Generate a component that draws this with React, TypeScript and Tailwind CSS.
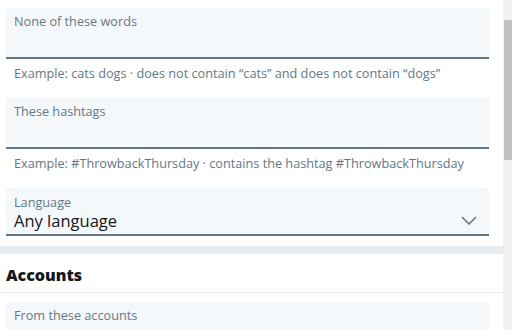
import React from "react";

const font = { fontFamily: '"Open Sans", "Segoe UI", Arial, sans-serif' };

function TextField({ label }: { label: string }) {
  return (
    <div className="h-[51px] border-b-2 border-[#657786] bg-[#f5f8fa] px-[8px] pt-[5px]">
      <div className="text-[12.7px] leading-[16px] text-[#657786]">{label}</div>
    </div>
  );
}

function Helper({ children }: { children: React.ReactNode }) {
  return (
    <div className="h-[39px] px-[8px] pt-[6px] text-[12.7px] leading-[16px] text-[#657786]">
      {children}
    </div>
  );
}

export default function App() {
  return (
    <div className="flex h-[330px] w-[512px] overflow-hidden bg-white" style={font}>
      <div className="w-[503px] shrink-0">
        <div className="pl-[6px] pr-[14px] pt-[8px]">
          <TextField label="None of these words" />
          <Helper>Example: cats dogs · does not contain “cats” and does not contain “dogs”</Helper>
          <TextField label="These hashtags" />
          <Helper>Example: #ThrowbackThursday · contains the hashtag #ThrowbackThursday</Helper>
          <div className="flex h-[48px] items-end justify-between border-b-2 border-[#657786] bg-[#f5f8fa] pb-[4px] pl-[8px] pr-[12px]">
            <div>
              <div className="text-[12.7px] leading-[17px] text-[#657786]">Language</div>
              <div className="text-[16.5px] leading-[19px] text-[#14171a]">Any language</div>
            </div>
            <svg width="16" height="9" viewBox="0 0 16 9" className="mb-[5px]">
              <path d="M1 1 L8 8 L15 1" fill="none" stroke="#657786" strokeWidth="1.6" />
            </svg>
          </div>
        </div>
        <div className="mt-[10px] h-[8px] bg-[#e6ecf0]" />
        <div className="flex h-[39px] items-center border-b border-[#e6ecf0] px-[6px] pt-[4px]">
          <div className="text-[16px] font-extrabold leading-[22px] text-[#14171a]">Accounts</div>
        </div>
        <div className="pl-[6px] pr-[14px] pt-[9px]">
          <TextField label="From these accounts" />
        </div>
      </div>
      <div className="w-[9px] shrink-0 bg-[#f1f1f1]">
        <div className="ml-[1px] mt-[20px] h-[140px] bg-[#c1c1c1]" />
      </div>
    </div>
  );
}
